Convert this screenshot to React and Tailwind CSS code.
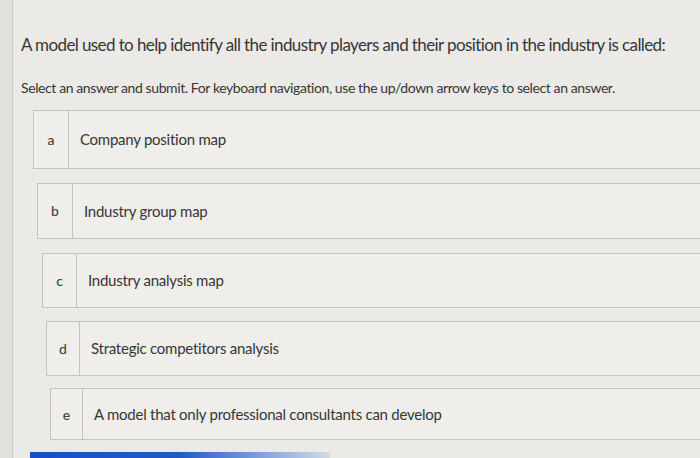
const options = [
  { k: 'a', text: 'Company position map', box: 'mt-[13px] ml-[20px] h-[60px]', col: 'w-[35px]' },
  { k: 'b', text: 'Industry group map', box: 'mt-[14px] ml-[24px] h-[57px]', col: 'w-[35px]' },
  { k: 'c', text: 'Industry analysis map', box: 'mt-[14px] ml-[29px] h-[56px]', col: 'w-[34px]' },
  { k: 'd', text: 'Strategic competitors analysis', box: 'mt-[13px] ml-[33px] h-[56px]', col: 'w-[33px]' },
  { k: 'e', text: 'A model that only professional consultants can develop', box: 'mt-[12px] ml-[37px] h-[53px]', col: 'w-[32px]' },
];

export default function App() {
  return (
    <div className="w-[700px] h-[458px] overflow-hidden bg-[#e2e0dd] font-['Lato','Open_Sans',sans-serif] text-[#363638]">
      <div className="ml-[12px] h-full border-l border-[#c9c7c3] bg-[#ebeae7] flex flex-col">
        <div className="pl-[8px] pt-[33px] text-[17px] leading-[24px] tracking-[-0.6px] whitespace-nowrap">
          A model used to help identify all the industry players and their position in the industry is called:
        </div>
        <div className="pl-[8px] pt-[22px] text-[14px] leading-[18px] tracking-[-0.4px] whitespace-nowrap">
          Select an answer and submit. For keyboard navigation, use the up/down arrow keys to select an answer.
        </div>
        {options.map((o) => (
          <div key={o.k} className={`${o.box} -mr-[12px] flex border border-r-0 border-[#c4c3c0] bg-[#efeeeb]`}>
            <div className={`${o.col} shrink-0 flex items-center justify-center border-r border-[#c4c3c0] text-[14px] font-medium text-[#444446]`}>{o.k}</div>
            <div className="flex items-center pl-[11px] text-[15px] tracking-[-0.25px] whitespace-nowrap">{o.text}</div>
          </div>
        ))}
        <div className="mt-[12px] ml-[17px] h-[6px] w-[300px] bg-gradient-to-r from-[#1b4fc2] via-[#2459c4] via-50% to-[#d3dae6]" />
      </div>
    </div>
  );
}
